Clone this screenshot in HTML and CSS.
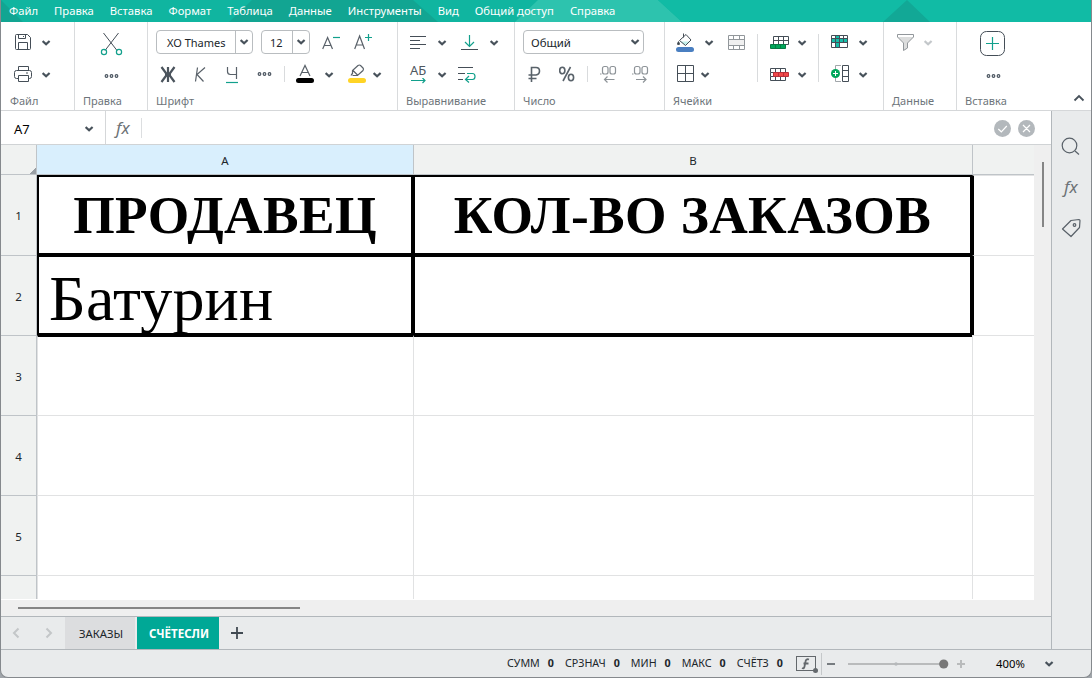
FILE: index.html
```html
<!DOCTYPE html>
<html lang="ru">
<head>
<meta charset="utf-8">
<title>Таблица</title>
<link rel="stylesheet" href="styles.css">
</head>
<body>
<svg class="defs" width="0" height="0">
  <symbol id="chev" viewBox="0 0 9 6"><path d="M.6 1 4.100 4.300 7.600 1" fill="none" stroke="currentColor" stroke-width="2.200"/></symbol>
  <symbol id="dots" viewBox="0 0 16 6"><g fill="none" stroke="#4b5560" stroke-width="1.2"><circle cx="3.500" cy="3" r="1.300"/><circle cx="8.500" cy="3" r="1.300"/><circle cx="13.500" cy="3" r="1.300"/></g></symbol>
</svg>
<div class="window">
  <nav class="menu">
    <svg class="menu-art" viewBox="0 0 1090 22" preserveAspectRatio="none">
      <path d="M0 0 22 22H0z" fill="#12a592"/>
      <path d="M251 0H412L437 22H228z" fill="#12a592"/>
      <path d="M537 0H657L681 22H514z" fill="#2dc3ae"/>
      <path d="M657 0H1090V22H681z" fill="#11bba5"/>
      <path d="M906 0 882 22H929z" fill="#12a896"/>
    </svg>
    <span>Файл</span><span>Правка</span><span>Вставка</span><span>Формат</span><span>Таблица</span><span>Данные</span><span>Инструменты</span><span>Вид</span><span>Общий доступ</span><span>Справка</span>
  </nav>

  <div class="ribbon">
    <section class="group file">
      <div class="row">
        <svg width="28" height="32" viewBox="14 26 28 32"><g class="ln"><path d="M17 34.5H27.5L30.5 37.5V48.5Q30.500 49.500 29.500 49.500H16.500Q15.500 49.500 15.500 48.500V35.500Q15.500 34.500 16.500 34.500z"/><path d="M18.500 34.500V38.500H25.500V34.500M18.500 49.500V42.500H27.500V49.500M23 36.500h1"/></g></svg>
        <svg class="chev"><use href="#chev"/></svg>
      </div>
      <div class="row">
        <svg width="28" height="32" viewBox="14 58 28 32"><g class="ln"><path d="M18.500 70.500V66.500H28.500V70.500M18 78.500H16.500Q14.500 78.500 14.500 76.500V72.500Q14.500 70.500 16.500 70.500H29.500Q31.500 70.500 31.500 72.500V76.500Q31.500 78.500 29.500 78.500H28M18.500 75.500H28.500V81.500H18.500zM26 73h2"/></g></svg>
        <svg class="chev"><use href="#chev"/></svg>
      </div>
      <h2>Файл</h2>
    </section>
    <section class="group edit">
      <div class="row">
        <svg width="24" height="32" viewBox="99 26 24 32"><path d="M103.500 33 117 50.500M118.500 33 105 50.500" class="ln"/><g class="tl"><circle cx="104" cy="52" r="2.600"/><circle cx="119" cy="52" r="2.600"/></g></svg>
      </div>
      <div class="row"><svg class="dots"><use href="#dots"/></svg></div>
      <h2>Правка</h2>
    </section>
    <section class="group font">
      <div class="row">
        <div class="combo"><span>XO Thames</span><i><svg class="chev"><use href="#chev"/></svg></i></div>
        <div class="combo"><span>12</span><i><svg class="chev"><use href="#chev"/></svg></i></div>
        <svg width="32" height="32" viewBox="322 26 32 32"><path d="M322.700 49 327.600 37.500 332.500 49M324.300 45.500H331" class="ln g"/><path d="M333 37.500h7" class="tl"/></svg>
        <svg width="24" height="32" viewBox="354 26 24 32"><path d="M354.700 49 359.600 36 364.500 49M356.300 45H363" class="ln g"/><path d="M365 37.500h7M368.500 34v7" class="tl"/></svg>
      </div>
      <div class="row">
        <svg width="34" height="32" viewBox="160 58 34 32"><path d="M168 67V82M161.500 67 167 74.500 161.500 82M174.500 67 169 74.500 174.500 82M165 74.500H171" fill="none" stroke="#4b545d" stroke-width="2.200"/></svg>
        <svg width="31" height="32" viewBox="194 58 31 32"><path d="M197.500 67.500 195.500 81.500M205 67.500 197 74.500 203.500 81.500" class="ln g"/></svg>
        <svg width="31" height="32" viewBox="225 58 31 32"><path d="M227.500 67V71.500Q227.500 74.500 230.500 74.500H236.500M236.500 67V79" class="ln g"/><path d="M226 82.500h12" class="tl"/></svg>
        <svg class="dots up"><use href="#dots"/></svg>
        <b class="sep short"></b>
        <svg width="29" height="32" viewBox="296 58 29 32"><path d="M300 76 305 65.500 310 76M301.500 72.500H308.500" class="ln g"/><rect x="296" y="78" width="18" height="5" rx="2.500"/></svg>
        <svg class="chev"><use href="#chev"/></svg>
        <svg width="25" height="32" viewBox="348 58 25 32"><path d="M352.500 74.500V70.500L358 65.500Q359.500 64.500 360.500 65.500L363 68Q364 69 363 70.500L357.500 75.500H352.500M353 70.500 358 75.500M352.500 73 351 75.500" class="ln g"/><rect x="348" y="78" width="18" height="5" rx="2.500" fill="#ffd426"/></svg>
        <svg class="chev"><use href="#chev"/></svg>
      </div>
      <h2>Шрифт</h2>
    </section>
    <section class="group align">
      <div class="row">
        <svg width="28" height="32" viewBox="410 26 28 32"><path d="M410 36.500h16M410 40.500h10M410 44.500h16M410 48.500h10" class="ln"/></svg>
        <svg class="chev"><use href="#chev"/></svg>
        <svg width="29" height="32" viewBox="461 26 29 32"><path d="M461 49.500h17" class="ln"/><path d="M469.500 35V46M465 42 469.500 46.500 474 42" class="tl"/></svg>
        <svg class="chev"><use href="#chev"/></svg>
      </div>
      <div class="row">
        <div class="ab"><span>АБ</span><svg width="17" height="6" viewBox="0 0 17 6"><path d="M1 2.500H15M12.500 0 15 2.500 12.500 5" class="tl"/></svg></div>
        <svg class="chev"><use href="#chev"/></svg>
        <svg width="29" height="32" viewBox="457 58 29 32"><path d="M458 67.500h15M458 73.500h7M458 79.500h5" class="ln"/><path d="M467 73.500h5.500q2.500 0 2.500 3t-2.500 3H466M469 76 465.500 79.500 469 82.500" class="tl"/></svg>
      </div>
      <h2>Выравнивание</h2>
    </section>
    <section class="group number">
      <div class="row"><div class="combo wide"><span>Общий</span><svg class="chev"><use href="#chev"/></svg></div></div>
      <div class="row">
        <svg width="31" height="32" viewBox="528 58 31 32"><path d="M531.500 82V67.500H536Q539.500 67.500 539.500 71T536 75H528.500M528.500 78.500H536.500" fill="none" stroke="#59626a" stroke-width="1.600"/></svg>
        <svg width="28" height="32" viewBox="559 58 28 32"><g fill="none" stroke="#59626a" stroke-width="1.600"><ellipse cx="562.300" cy="70.500" rx="2.600" ry="3.300"/><ellipse cx="571" cy="77.500" rx="2.600" ry="3.300"/><path d="M570.500 67 563 81"/></g></svg>
        <b class="sep short"></b>
        <svg width="32" height="32" viewBox="600 58 32 32"><g fill="none" stroke="#8d9398" stroke-width="1.200"><rect x="602.500" y="66.500" width="5.500" height="7.500" rx="2"/><rect x="610" y="66.500" width="5.500" height="7.500" rx="2"/><path d="M600 74h1.500"/><path d="M604.500 79.500h10M607.500 76.500l-3 3 3 3"/></g></svg>
        <svg width="20" height="32" viewBox="632 58 20 32"><g fill="none" stroke="#8d9398" stroke-width="1.200"><rect x="634.500" y="66.500" width="5.500" height="7.500" rx="2"/><rect x="642" y="66.500" width="5.500" height="7.500" rx="2"/><path d="M632 74h1.500"/><path d="M636 79.500h10M643 76.500l3 3-3 3"/></g></svg>
      </div>
      <h2>Число</h2>
    </section>
    <section class="group cells">
      <div class="cellbox a">
        <div class="row">
          <svg width="29" height="32" viewBox="676 26 29 32"><path d="M680 41.500H690L685.500 45.500z" fill="#c5f0ea"/><path d="M679.500 40.500 686 34.500 691 40 685.500 45.500zM683.500 37.500V33.500" class="ln"/><path d="M678.500 41q-3 4 0 4t0-4" fill="#3f4850"/><rect x="676" y="47" width="18" height="5" rx="2.500" fill="#4a7fc1"/></svg>
          <svg class="chev"><use href="#chev"/></svg>
          <svg width="20" height="32" viewBox="728 26 20 32"><rect x="728.500" y="39.500" width="16" height="6" fill="#f0f0f0"/><path d="M728.500 35.500h16v14h-16zM728.500 39.500h16M728.500 45.500h16M733.500 35.500v4M739.500 35.500v4M733.500 45.500v4M739.500 45.500v4" fill="none" stroke="#92979b"/></svg>
        </div>
        <div class="row r2">
          <svg width="25" height="32" viewBox="676 58 25 32"><path d="M677.500 65.500h16v16h-16zM685.500 65.500v16M677.500 73.500h16" class="ln"/></svg>
          <svg class="chev"><use href="#chev"/></svg>
        </div>
      </div>
      <b class="sep tall"></b>
      <div class="cellbox b">
        <div class="row">
          <svg width="28" height="32" viewBox="770 26 28 32"><path d="M773.500 36.500h15v8h-15zM773.500 40.500h15M778.500 36.500v8M783.500 36.500v8" class="ln"/><path d="M770.500 44.500h15v4h-15zM775.500 44.500v4M780.500 44.500v4" fill="#00a65a" stroke="#087a45"/></svg>
          <svg class="chev"><use href="#chev"/></svg>
        </div>
        <div class="row">
          <svg width="28" height="32" viewBox="770 58 28 32"><path d="M770.500 68.500h15v4h-15zM770.500 76.500h15v4h-15zM770.500 72.500v4M775.500 68.500v4M780.500 68.500v4M775.500 76.500v4M780.500 76.500v4" class="ln"/><path d="M773.500 72.500h15v4h-15zM778.500 72.500v4M783.500 72.500v4" fill="#f04848" stroke="#b9303b"/></svg>
          <svg class="chev"><use href="#chev"/></svg>
        </div>
      </div>
      <b class="sep tall"></b>
      <div class="cellbox c">
        <div class="row">
          <svg width="28" height="32" viewBox="831 26 28 32"><path d="M835.500 35.500h4v12h-4zM831.500 38.500h16v4h-16z" fill="#16bda8"/><path d="M831.500 35.500h16v12h-16zM831.500 38.500h16M831.500 42.500h16M835.500 35.500v12M839.500 35.500v12M843.500 35.500v7" class="ln"/></svg>
          <svg class="chev"><use href="#chev"/></svg>
        </div>
        <div class="row">
          <svg width="28" height="32" viewBox="831 58 28 32"><path d="M841 65.500h-5.500v16h5.500" fill="none" stroke="#a1a6aa"/><path d="M842.500 65.500h6v16h-6zM842.500 70.500h6M842.500 76.500h6" class="ln"/><circle cx="835.500" cy="73.500" r="4.500" fill="#00a65a"/><path d="M833 73.500h5M835.500 71v5" stroke="#fff"/></svg>
          <svg class="chev"><use href="#chev"/></svg>
        </div>
      </div>
      <h2>Ячейки</h2>
    </section>
    <section class="group data">
      <div class="row">
        <svg width="27" height="32" viewBox="897 26 27 32"><path d="M897.500 34.500H913.500V37L907.500 43V48L903.500 50.500V43L897.500 37z" fill="#dcdddd" stroke="#92979b"/><path d="M898 35h15v2h-15z" fill="#fff"/></svg>
        <svg class="chev off"><use href="#chev"/></svg>
      </div>
      <h2>Данные</h2>
    </section>
    <section class="group insert">
      <div class="row"><svg width="26" height="32" viewBox="980 26 26 32"><rect x="980.500" y="31.500" width="24" height="24" rx="6" class="ln"/><path d="M986 43.500h13M992.500 37v13" class="tl"/></svg></div>
      <div class="row"><svg class="dots"><use href="#dots"/></svg></div>
      <h2>Вставка</h2>
      <svg class="collapse" width="12" height="8" viewBox="0 0 12 8"><path d="M1.500 6.500 6 2 10.500 6.500" fill="none" stroke="#48525b" stroke-width="1.800"/></svg>
    </section>
  </div>

  <div class="body">
    <main>
      <div class="formula">
        <div class="name"><span>A7</span><svg class="chev"><use href="#chev"/></svg></div>
        <em class="fx">fx</em>
        <div class="input"></div>
        <svg width="42" height="18" viewBox="0 0 42 18"><circle cx="9.500" cy="9.500" r="8.500" fill="#b3b8bc"/><circle cx="33.500" cy="9.500" r="8.500" fill="#b3b8bc"/><path d="M5.300 10 8.300 12.800 13.800 7M30 6l7 7M37 6l-7 7" fill="none" stroke="#fff" stroke-width="1.200"/></svg>
      </div>
      <div class="area">
        <div class="sheet">
          <div class="corner"></div><div class="ch sel">A</div><div class="ch">B</div><div class="ch"></div>
          <div class="rh">1</div><div class="cell a box head">ПРОДАВЕЦ</div><div class="cell b box head">КОЛ-ВО ЗАКАЗОВ</div><div class="cell after"></div>
          <div class="rh">2</div><div class="cell a box value">Батурин</div><div class="cell b box"></div><div class="cell after"></div>
          <div class="rh">3</div><div class="cell under"></div><div class="cell under"></div><div class="cell"></div>
          <div class="rh">4</div><div class="cell"></div><div class="cell"></div><div class="cell"></div>
          <div class="rh">5</div><div class="cell"></div><div class="cell"></div><div class="cell"></div>
          <div class="rh"></div><div class="cell"></div><div class="cell"></div><div class="cell"></div>
        </div>
        <div class="vscroll"><i></i></div>
      </div>
      <div class="hscroll"><i></i></div>
      <div class="tabs">
        <svg width="64" height="32" viewBox="1 617 64 32"><path d="M18.500 628.500 14 633 18.500 637.500M46.500 628.500 51 633 46.500 637.500" fill="none" stroke="#c3c6c8" stroke-width="2"/></svg>
        <div class="tab">ЗАКАЗЫ</div><div class="tab on">СЧЁТЕСЛИ</div>
        <svg width="36" height="32" viewBox="219 617 36 32"><path d="M231 633h12M237 627v12" stroke="#414a52" stroke-width="1.800"/></svg>
      </div>
    </main>
    <aside>
      <svg width="39" height="60" viewBox="1052 120 39 60"><circle cx="1069.500" cy="145.500" r="7.300" class="ln g"/><path d="M1075 151 1079 154.500" class="ln g"/></svg>
      <em class="fx">fx</em>
      <svg width="39" height="40" viewBox="1052 208 39 40"><path d="M1071 220.500 1079 219.500Q1080 219.500 1080 220.500L1079.500 227.500 1071 236.500 1062.500 229z" class="ln g" stroke-linejoin="round"/><circle cx="1074.500" cy="225" r="1.300" class="ln g"/></svg>
    </aside>
  </div>

  <footer class="status">
    <div class="stats"><span>СУММ</span><b>0</b><span>СРЗНАЧ</span><b>0</b><span>МИН</span><b>0</b><span>МАКС</span><b>0</b><span>СЧЁТЗ</span><b>0</b></div>
    <svg width="195" height="26" viewBox="790 650 195 26"><rect x="796.500" y="655.500" width="19" height="14" fill="none" stroke="#63686c"/><path d="M809 658.500q-3-1-3.500 2l-1 5q-.500 2.500-2.500 1.500M803.500 662.500h5" fill="none" stroke="#63686c" stroke-width="1.800"/><circle cx="815.500" cy="669.500" r="2.500" fill="#63686c"/><path d="M821.500 652v22" stroke="#c5c8ca"/><path d="M827 663h8" stroke="#777c80" stroke-width="2"/><path d="M848 663h96M957 663h8M961 659v8" stroke="#b9bbbc" stroke-width="2"/><circle cx="896" cy="663" r="1.700" fill="#b5b8ba"/><circle cx="943.700" cy="663" r="4.600" fill="#777"/></svg>
    <span class="zoom">400%</span><svg class="chev"><use href="#chev"/></svg>
  </footer>
</div>
</body>
</html>
```
FILE: styles.css
```css
* { box-sizing: border-box; }
body { margin: 0; background: #a0a5aa; font: 12px/16px "Noto Sans", "Open Sans", sans-serif; color: #20262b; overflow: hidden; }
svg { display: block; flex: none; }
.defs { display: none; }
.window { width: 1092px; height: 678px; border: solid #85898d; border-width: 0 1px 1px; border-radius: 0 0 8px 8px; overflow: hidden; background: #e9ebec; display: flex; flex-direction: column; }
.ln { fill: none; stroke: #454e57; stroke-width: 1; }
.ln.g { stroke: #596169; stroke-width: 1.2; }
.tl { fill: none; stroke: #12a08c; stroke-width: 1.2; }
.chev { width: 9px; height: 6px; color: #48525b; }
.chev.off { color: #c3c7ca; }
.dots { width: 16px; height: 6px; }

.menu { position: relative; height: 22px; flex: none; background: #10b5a0; color: #fff; display: flex; gap: 16px; padding-left: 8px; font-size: 11.25px; line-height: 22px; white-space: nowrap; }
.menu span { position: relative; }
.menu-art { position: absolute; inset: 0; width: 1090px; height: 22px; }

.ribbon { height: 89px; flex: none; display: flex; background: #fff; border-bottom: 1px solid #d5d7d9; }
.group { height: 88px; border-right: 1px solid #d9dbdd; padding-top: 4px; display: grid; grid-template-rows: 32px 32px 20px; flex: none; }
.group h2 { margin: 0; padding-left: 8px; font-size: 11px; font-weight: 400; line-height: 21px; color: #6d747a; grid-row: 3; }
.row { display: flex; align-items: center; height: 32px; }
.row > .chev { margin-top: 2px; }
.file { width: 74px; }
.file .row { padding-left: 13px; }
.file h2 { padding-left: 9px; }
.edit { width: 73px; }
.edit .row { padding-left: 24px; }
.edit .dots { margin: 4px 0 0 4px; }
.font { width: 250px; }
.font .row { padding-left: 8px; }
.font .row + .row { padding-left: 12px; }
.font .row + .row .chev + svg { margin-left: 14px; }
.combo { width: 97px; height: 24px; margin-right: 8px; border: 1px solid #b9bdc0; border-radius: 4px; display: flex; align-items: center; font-size: 11px; }
.combo span { flex: 1; padding: 1px 0 0 10px; white-space: nowrap; }
.combo i { width: 17px; height: 22px; border-left: 1px solid #b9bdc0; display: flex; align-items: center; justify-content: center; }
.combo + .combo { width: 49px; margin-right: 12px; }
.combo + .combo span { padding-left: 8px; }
.combo.wide { width: 121px; padding-right: 3px; font-size: 11.4px; }
.combo.wide span { padding-left: 7px; }
.dots.up { margin-right: 12px; }
.sep { width: 1px; background: #d9dbdd; }
.sep.short { height: 16px; margin-right: 11px; }
.align { width: 117px; }
.align .row { padding-left: 12px; }
.align .row .chev + svg { margin-left: 14px; }
.align .row + .row .chev + svg { margin-left: 10px; }
.ab { width: 28px; height: 22px; font-size: 13px; line-height: 15px; color: #4f5860; letter-spacing: -.1px; }
.number { width: 150px; }
.number .row { padding-left: 8px; }
.number .row + .row { padding-left: 13px; }
.number .sep { margin-right: 12px; }
.cells { width: 219px; grid-template-columns: 92px 1px 60px 1px 64px; }
.cellbox { grid-row: 1 / 3; }
.cellbox.a { padding-left: 11px; }
.cellbox.a .chev + svg { margin-left: 14px; }
.cellbox.b, .cellbox.c { padding-left: 12px; }
.sep.tall { grid-row: 1 / 3; height: 48px; margin-top: 8px; }
.data { width: 73px; }
.data .row { padding-left: 13px; }
.insert { width: 134px; border: 0; position: relative; }
.insert .row { padding-left: 23px; }
.insert .dots { margin: 4px 0 0 5px; }
.collapse { position: absolute; right: 6px; bottom: 8px; }

.body { flex: 1; display: flex; min-height: 0; }
main { width: 1050px; flex: none; }
.formula { height: 34px; background: #fff; border-bottom: 1px solid #d0d3d5; display: flex; align-items: center; }
.name { width: 105px; height: 33px; border-right: 1px solid #d5d7d9; display: flex; align-items: center; justify-content: space-between; padding: 2px 11px 0 13px; font-size: 13px; }
.name span { color: #000; }
.fx { font: italic 17px "Noto Sans", sans-serif; color: #6d7276; }
.formula .fx { width: 35px; padding-left: 10px; line-height: 32px; }
.input { width: 852px; height: 20px; border-left: 1px solid #dcdee0; }
.area { display: flex; height: 455px; background: #fff; }
.sheet { width: 1033px; height: 454px; display: grid; grid-template-columns: 36px 376px 559px 62px; grid-template-rows: 30px repeat(5, 80px) 24px; overflow: hidden; }
.corner, .ch { background: #f0f2f1; border-right: 1px solid #bfc4c8; border-bottom: 1px solid #bfc4c8; }
.corner { background: linear-gradient(135deg, transparent 50%, #999fa4 50%) right bottom / 6px 6px no-repeat #f0f2f1; }
.ch { text-align: center; line-height: 31px; font-size: 11.5px; border-right: 0; border-left: 1px solid #bfc4c8; }
.ch.sel { background: #d9effd; border-left: 0; }
.rh { background: #f0f2f1; border-right: 1px solid #bfc4c8; border-top: 1px solid #bfc4c8; text-align: center; line-height: 82px; font-size: 11.5px; }
.ch + .rh { border-top: 0; }
.cell { border: solid #e1e2e3; border-width: 1px 0 0 1px; background: #fff; font-family: "Liberation Serif", serif; color: #000; white-space: nowrap; }
.cell.box { border: 2px solid #000; }
.cell.after { border-left: 2px solid #000; }
.cell.under { border-top: 2px solid #000; }
.head { font-size: 53.33px; font-weight: 700; line-height: 77px; text-align: center; letter-spacing: .4px; }
.value { font-size: 64px; line-height: 84px; padding-left: 10px; letter-spacing: .2px; }
.vscroll { width: 17px; background: #efefef; padding: 17px 0 0 8px; }
.vscroll i { display: block; width: 2px; height: 65px; background: #858585; }
.hscroll { height: 17px; background: #efefef; border-bottom: 1px solid #b2b7bb; padding: 7px 0 0 17px; }
.hscroll i { display: block; width: 282px; height: 2px; background: #858585; }
.tabs { height: 32px; display: flex; }
.tab { width: 70px; padding-left: 2px; text-align: center; font-size: 11.3px; background: #dcdddf; line-height: 33px; margin-right: 2px; white-space: nowrap; }
.tab.on { width: 82px; margin: 0; background: #00a896; color: #fff; font-weight: 700; font-size: 11.5px; }
aside { width: 40px; border-left: 1px solid #b2b7bb; padding-top: 9px; }
aside .fx { display: block; height: 28px; line-height: 14px; padding-left: 12px; }
.status { height: 28px; flex: none; border-top: 1px solid #b2b7bb; display: flex; align-items: center; }
.stats { width: 789px; padding: 0 0 2px 506px; display: flex; font-size: 10.7px; white-space: nowrap; }
.stats b { margin: 0 11px 0 8px; }
.zoom { width: 49px; margin: 1px 0 0 11px; color: #000; font-size: 11.3px; }
```
